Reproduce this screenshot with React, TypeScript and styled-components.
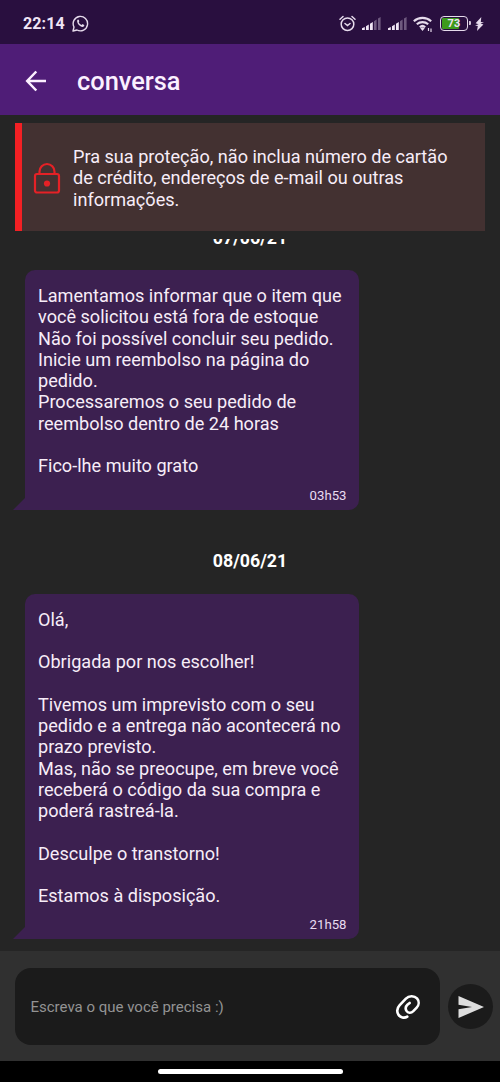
import React from 'react';
import styled, { createGlobalStyle } from 'styled-components';

const GlobalStyle = createGlobalStyle`
  *, *::before, *::after { box-sizing: border-box; }
  body {
    margin: 0;
    background: #252525;
    font-family: Roboto, "Noto Sans", sans-serif;
    color: #fff;
  }
`;

const Screen = styled.div`
  width: 500px;
  height: 1082px;
  display: flex;
  flex-direction: column;
  overflow: hidden;
  background: #252525;
`;

const StatusBar = styled.div`
  flex: 0 0 44px;
  display: flex;
  align-items: center;
  justify-content: space-between;
  padding: 3px 16.5px 0 23px;
  background: #290f3f;
  color: #f0e4f6;
`;

const StatusGroup = styled.div<{ $gap: number }>`
  display: flex;
  align-items: center;
  gap: ${(p) => p.$gap}px;
`;

const Clock = styled.span`
  font-size: 16px;
  font-weight: 700;
  letter-spacing: 0.1px;
  line-height: 20px;
`;

const Battery = styled.div`
  position: relative;
  width: 28px;
  height: 15px;
  border: 1.6px solid #e6dbec;
  border-radius: 4px;
  padding: 1px;
  &::after {
    content: '';
    position: absolute;
    right: -4px;
    top: 4px;
    width: 2px;
    height: 4px;
    border-radius: 0 1px 1px 0;
    background: #cfc2d6;
  }
`;

const Charge = styled.div`
  width: 73%;
  height: 100%;
  border-radius: 1px;
  background: #3d9a1c;
`;

const ChargeText = styled.span`
  position: absolute;
  inset: 0;
  text-align: center;
  font-size: 11px;
  font-weight: 700;
  line-height: 14px;
`;

const Header = styled.header`
  flex: 0 0 71px;
  display: flex;
  align-items: center;
  gap: 28px;
  padding: 2px 23px 0;
  background: #4f1d77;
`;

const Title = styled.h1`
  margin: 0;
  font-size: 25.4px;
  font-weight: 500;
  line-height: 32px;
  color: #fbf0ff;
`;

const Notice = styled.section`
  flex: 0 0 108px;
  display: flex;
  align-items: center;
  gap: 12px;
  margin: 8px 15px 0;
  padding: 2px 0 0 11px;
  border-left: 7px solid #f32024;
  background: #433131;
`;

const BodyText = styled.p`
  margin: 0;
  font-size: 18.1px;
  line-height: 21.3px;
  white-space: pre;
  color: #f7edf8;
`;

const Messages = styled.main`
  flex: 1;
  min-height: 0;
  margin-top: 8px;
  padding-bottom: 12px;
  overflow: hidden;
  display: flex;
  flex-direction: column;
  justify-content: flex-end;
`;

const DateLabel = styled.div<{ $after: number }>`
  flex: none;
  text-align: center;
  font-size: 17.8px;
  font-weight: 700;
  line-height: 22px;
  margin-bottom: ${(p) => p.$after}px;
`;

const Bubble = styled.article<{ $height: number; $after: number }>`
  position: relative;
  flex: none;
  width: 333.5px;
  height: ${(p) => p.$height}px;
  margin: 0 0 ${(p) => p.$after}px 25px;
  padding: 15px 12px 6.500px 13px;
  display: flex;
  flex-direction: column;
  justify-content: space-between;
  border-radius: 10px 10px 10px 0;
  background: #3c2050;
  &::before {
    content: '';
    position: absolute;
    left: -12px;
    bottom: 0;
    width: 12px;
    height: 12px;
    background: #3c2050;
    clip-path: polygon(100% 0, 100% 100%, 0 100%);
  }
`;

const Time = styled.time`
  align-self: flex-end;
  font-size: 13.2px;
  line-height: 17px;
  color: #e9dcf0;
`;

const Composer = styled.footer`
  flex: 0 0 110px;
  display: flex;
  align-items: center;
  gap: 8px;
  padding: 1px 7px 0 15px;
  background: #303030;
`;

const Field = styled.div`
  flex: 0 0 425px;
  height: 77px;
  display: flex;
  align-items: center;
  justify-content: space-between;
  padding: 0 19px 0 15.5px;
  border-radius: 16px;
  background: #1b1b1b;
`;

const Placeholder = styled.span`
  font-size: 15px;
  line-height: 20px;
  color: #939393;
`;

const SendButton = styled.button`
  width: 45px;
  height: 45px;
  padding: 0;
  border: 0;
  border-radius: 50%;
  background: #1b1b1b;
  display: flex;
  align-items: center;
  justify-content: center;
`;

const NavBar = styled.div`
  flex: 0 0 21px;
  display: flex;
  justify-content: center;
  padding-top: 8px;
  background: #000;
`;

const NavPill = styled.div`
  width: 185px;
  height: 5px;
  border-radius: 3px;
  background: #fff;
`;

const WhatsApp = () => (
  <svg width="17" height="17" viewBox="0 0 17 17" fill="none" stroke="#e6dbec" strokeWidth="1.4">
    <path d="M1 16l1-4A7.2 7.2 0 1 1 5 15z" strokeLinejoin="round" />
    <path d="M5.2 5.2c.5-1 1.3-.9 1.6-.2l.5 1.2-.6 1c.7 1.4 1.6 2.2 3 2.8l.9-.9 1.5.8c.5.4.2 1.3-.4 1.7-2.6 1.5-7.2-3-6.5-6.4z" fill="#e6dbec" stroke="none" />
  </svg>
);

const Alarm = () => (
  <svg width="17" height="17" viewBox="0 0 17 17" fill="none" stroke="#e6dbec" strokeWidth="1.5" strokeLinecap="round">
    <circle cx="8.5" cy="9.2" r="6.3" />
    <path d="M1 4.2L4 1.5M16 4.2L13 1.5M6 8.5l2.500 2L11 8.500" />
  </svg>
);

const Signal = () => (
  <svg width="19" height="13" viewBox="0 0 19 13" fill="#f0e6f5">
    <path d="M0 11.2L2.800 10V13H0zM4 9.200L6.800 7.600V13H4zM8 6.700L10.800 5V13H8z" />
    <path d="M12 4.2L14.600 2.600V13H12zM16 1.500L18.600 0V13H16z" opacity=".35" />
  </svg>
);

const Wifi = () => (
  <svg width="20" height="16" viewBox="0 0 20 16" fill="none" stroke="#e6dbec" strokeWidth="2.1">
    <path d="M.8 5.200a13 13 0 0 1 17.400 0M3.800 8.300a8.500 8.500 0 0 1 11.400 0M6.800 11.200a4 4 0 0 1 5.400 0" />
    <path d="M7.300 12.200L9.500 15l2.200-2.800a3.500 3.500 0 0 0-4.400 0z" fill="#e6dbec" stroke="none" />
    <path d="M15.500 12v3M18 12.500V16" strokeWidth="1.2" />
  </svg>
);

const Bolt = () => (
  <svg width="9" height="14" viewBox="0 0 9 14" fill="#e6dbec">
    <path d="M6.300 0L.6 6.200l3 1L0 8.600l2.800.3L2 14l6.400-6.600-2.800-.8L9 5.300l-3.200-.4z" />
  </svg>
);

const BackArrow = () => (
  <svg width="26" height="22" viewBox="0 0 26 22" fill="none" stroke="#fbf0ff" strokeWidth="2.5">
    <path d="M23 11H4.500M13.300 1.500L4.200 11l9.100 9.500" />
  </svg>
);

const Lock = () => (
  <svg width="28" height="32" viewBox="0 0 28 32" fill="none" stroke="#e52126" strokeWidth="2.2">
    <rect x="2" y="12" width="24" height="18.5" rx="2" />
    <path d="M6.500 12V9.500a7.500 7.500 0 0 1 15 0V12" />
    <circle cx="14" cy="21.5" r="3.1" fill="#e52126" stroke="none" />
  </svg>
);

const Clip = () => (
  <svg width="26" height="26" viewBox="0 0 26 26" fill="none" stroke="#fff" strokeWidth="2.6" strokeLinecap="round">
    <path d="M12.300 22.600C9.300 24.600 5.200 23.500 3.300 20.500C1.600 17.300 2.300 13.800 4.500 11.400L10.900 4.700C14 1.500 19.200 1.400 22 4.400C24.400 7.300 24 11.200 21.700 13.600L18.300 17.200C16 19.500 12.900 19.100 11.500 16.900C10.200 14.700 10.700 12.400 12.400 10.800L14.700 9" />
  </svg>
);

const Send = () => (
  <svg width="26" height="22" viewBox="0 0 26 22" fill="#dedede">
    <path d="M.5 0L26 11L.5 22V13.300L14 11L.5 8.700z" />
  </svg>
);

const firstMessage = `Lamentamos informar que o item que
você solicitou está fora de estoque
Não foi possível concluir seu pedido.
Inicie um reembolso na página do
pedido.
Processaremos o seu pedido de
reembolso dentro de 24 horas

Fico-lhe muito grato`;

const secondMessage = `Olá,

Obrigada por nos escolher!

Tivemos um imprevisto com o seu
pedido e a entrega não acontecerá no
prazo previsto.
Mas, não se preocupe, em breve você
receberá o código da sua compra e
poderá rastreá-la.

Desculpe o transtorno!

Estamos à disposição.`;

const noticeText = `Pra sua proteção, não inclua número de cartão
de crédito, endereços de e-mail ou outras
informações.`;

export default function App() {
  return (
    <>
      <GlobalStyle />
      <Screen>
        <StatusBar>
          <StatusGroup $gap={7}>
            <Clock>22:14</Clock>
            <WhatsApp />
          </StatusGroup>
          <StatusGroup $gap={6.6}>
            <Alarm />
            <Signal />
            <Signal />
            <Wifi />
            <Battery>
              <Charge />
              <ChargeText>73</ChargeText>
            </Battery>
            <Bolt />
          </StatusGroup>
        </StatusBar>
        <Header>
          <BackArrow />
          <Title>conversa</Title>
        </Header>
        <Notice>
          <Lock />
          <BodyText>{noticeText}</BodyText>
        </Notice>
        <Messages>
          <DateLabel $after={21}>07/06/21</DateLabel>
          <Bubble $height={240} $after={40}>
            <BodyText>{firstMessage}</BodyText>
            <Time>03h53</Time>
          </Bubble>
          <DateLabel $after={21.5}>08/06/21</DateLabel>
          <Bubble $height={345.5} $after={0}>
            <BodyText>{secondMessage}</BodyText>
            <Time>21h58</Time>
          </Bubble>
        </Messages>
        <Composer>
          <Field>
            <Placeholder>Escreva o que você precisa :)</Placeholder>
            <Clip />
          </Field>
          <SendButton aria-label="Enviar">
            <Send />
          </SendButton>
        </Composer>
        <NavBar>
          <NavPill />
        </NavBar>
      </Screen>
    </>
  );
}
